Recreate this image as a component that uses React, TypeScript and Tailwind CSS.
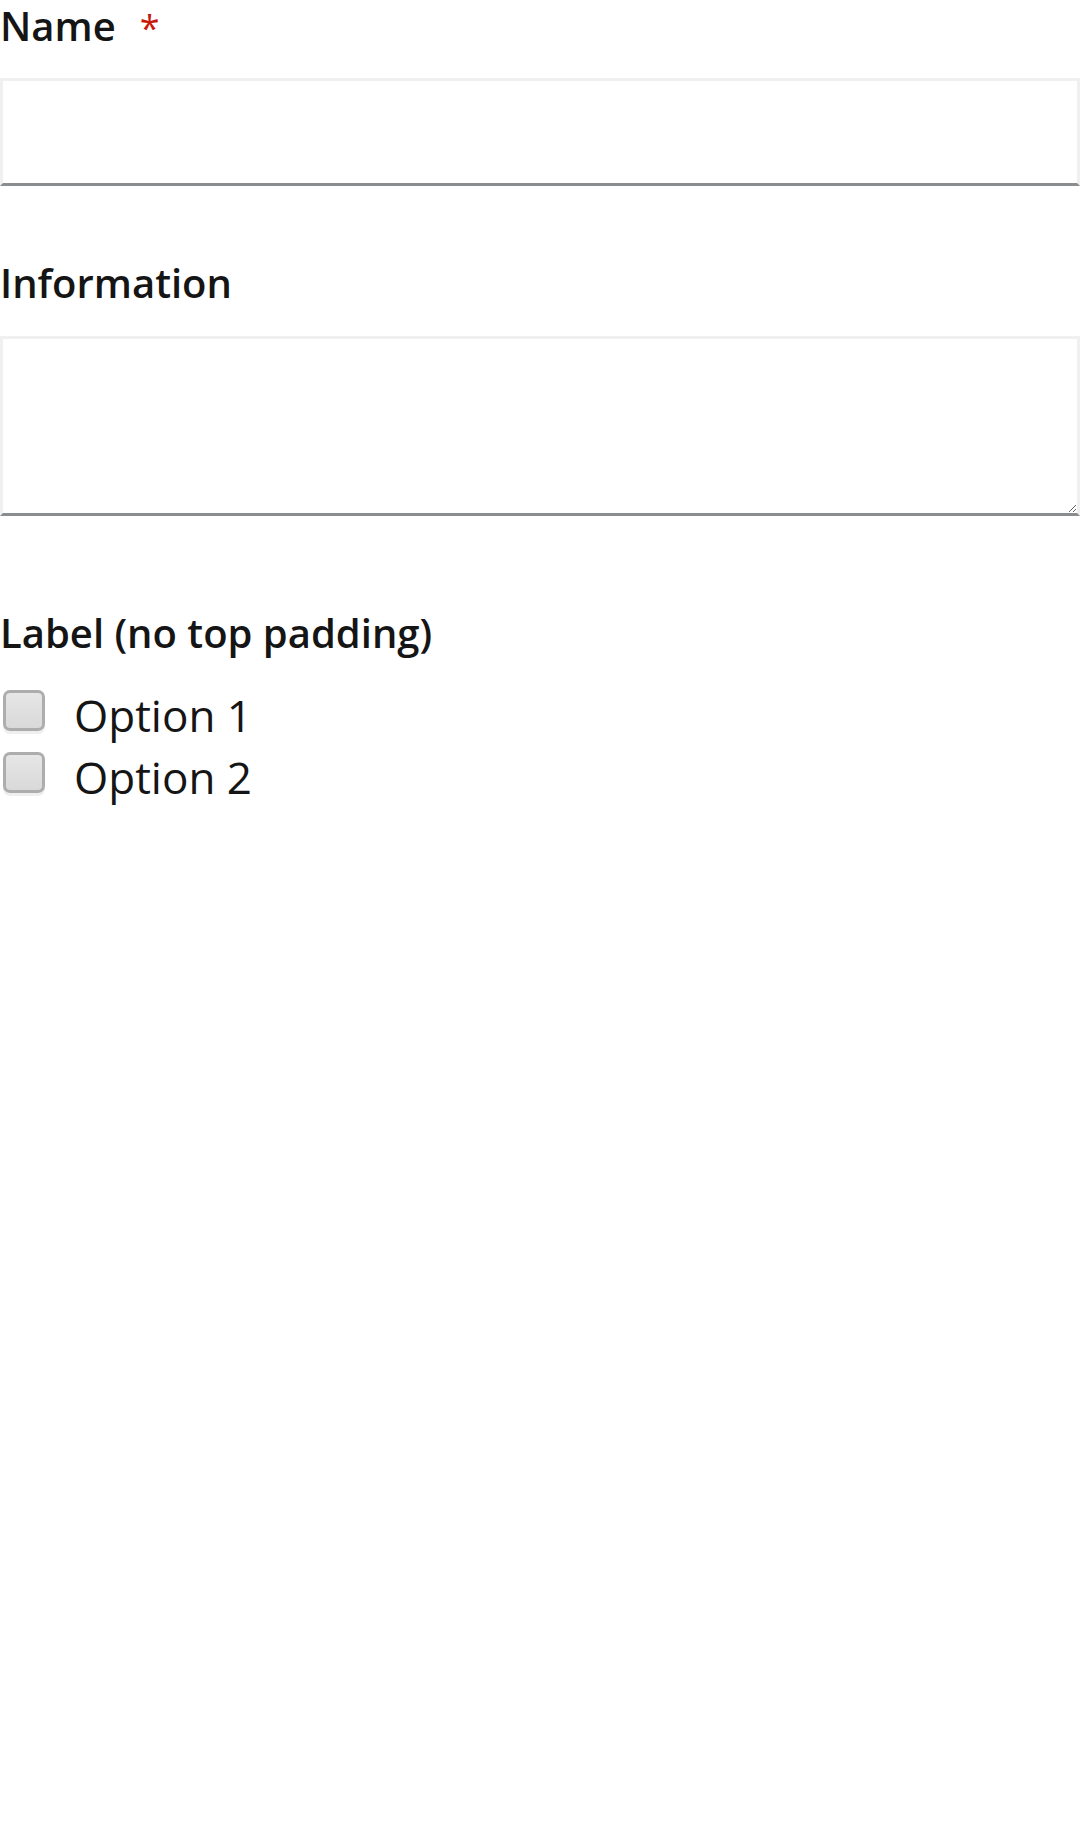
import React from 'react';

function FieldLabel({ text, required }: { text: string; required?: boolean }) {
  return (
    <label className="block h-[57px] text-[40px] leading-[52px] font-semibold text-[#151515]">
      {text}
      {required && <span className="ml-[24px] text-[36px] font-normal text-[#c9190b]">*</span>}
    </label>
  );
}

function Check({ label }: { label: string }) {
  return (
    <label className="flex h-[62px] items-start">
      <span className="ml-[3px] mt-[6px] h-[41px] w-[42px] shrink-0 rounded-[7px] border-[3px] border-[#adadad] bg-gradient-to-b from-[#e6e6e6] to-[#d9d9d9] shadow-[0_3px_0_#efefef]" />
      <span className="ml-[29px] text-[44px] leading-[62px] text-[#151515]">{label}</span>
    </label>
  );
}

export default function App() {
  return (
    <div className="min-h-[1836px] w-[1080px] bg-white font-['Open_Sans',sans-serif]">
      <div className="flex flex-col">
        <FieldLabel text="Name" required />
        <input
          type="text"
          className="mt-[21px] h-[108px] w-full border-[3px] border-[#f0f0f0] border-b-[#8a8d90] bg-white px-[24px] text-[48px] outline-none"
        />

        <div className="mt-[71px]">
          <FieldLabel text="Information" />
        </div>
        <textarea className="mt-[22px] h-[180px] w-full border-[3px] border-[#f0f0f0] border-b-[#8a8d90] bg-white px-[24px] text-[48px] outline-none" />

        <div className="mt-[91px]">
          <FieldLabel text="Label (no top padding)" />
        </div>
        <div className="mt-[20px] flex flex-col">
          <Check label="Option 1" />
          <Check label="Option 2" />
        </div>
      </div>
    </div>
  );
}
